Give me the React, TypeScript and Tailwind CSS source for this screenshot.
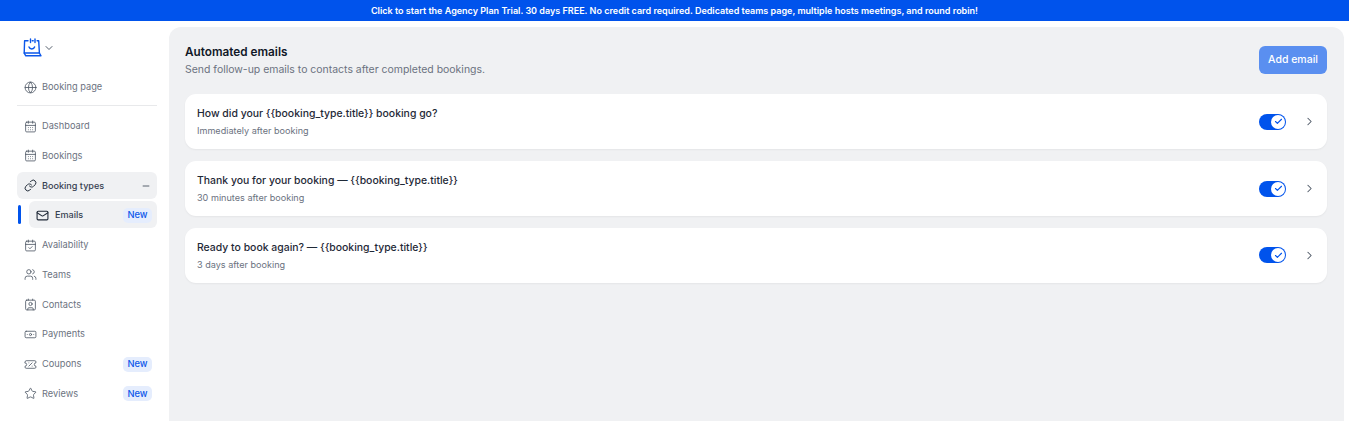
import React from "react";
import { Globe, CalendarDays, Link, Minus, Mail, CalendarCheck, Users, Contact, Banknote, TicketPercent, Star, ChevronDown, ChevronRight, Check } from "lucide-react";

const F = { fontFamily: "Inter, sans-serif" };

function Logo() {
  return (
    <svg width="19" height="19" viewBox="0 0 19 19" fill="none" stroke="#0b57ea" strokeWidth="1.4" strokeLinecap="round" strokeLinejoin="round">
      <path d="M7.5 1v3.5M12 1v3.5" />
      <path d="M5 2.8H1.6L1.2 15h15.2L15.7 2.8h-1.6M10.2 2.8H9.2" />
      <path d="M1.2 15.2 2.8 17.8h15.2l-1.6-2.8" />
      <path d="M6 9c.8 2.6 4.8 2.6 5.6 0" />
    </svg>
  );
}

function Item({ icon: Icon, label, badge }: { icon: any; label: string; badge?: boolean }) {
  return (
    <div className="flex h-[27px] items-center pl-[6.5px] pr-[5px] pt-[1px] text-[#6b7280]">
      <Icon size={13} strokeWidth={1.5} className="mr-[5.5px] shrink-0 text-[#4b5563]" />
      <span className="flex-1 text-[9.25px]">{label}</span>
      {badge && <New />}
    </div>
  );
}

function New() {
  return <span className="flex h-[15px] w-[29px] items-center justify-center rounded-[5px] bg-[#e5edfd] text-[9.3px] font-medium text-[#0b57ea]">New</span>;
}

function Row({ title, sub }: { title: string; sub: string }) {
  return (
    <div className="flex h-[55.4px] items-center rounded-[11px] bg-white pl-[12px] pr-[11px] shadow-[0_1px_2px_rgba(0,0,0,0.05)]">
      <div className="flex-1 pb-[1px]">
        <div className="pt-[1px] text-[10.45px] font-medium leading-[18px] text-[#1f2937]">{title}</div>
        <div className="text-[9.1px] leading-[15px] text-[#6b7280]">{sub}</div>
      </div>
      <div className="flex h-[16px] w-[27px] items-center justify-end rounded-full bg-[#0053ec] pr-[1px]">
        <span className="flex h-[14px] w-[14px] items-center justify-center rounded-full bg-white">
          <Check size={9} strokeWidth={3} className="text-[#0053ec]" />
        </span>
      </div>
      <ChevronRight size={13} strokeWidth={1.9} className="ml-[17px] text-[#4b5563]" />
    </div>
  );
}

export default function App() {
  return (
    <div style={F} className="flex h-[421px] w-[1360px] flex-col overflow-hidden bg-white">
      <div className="flex h-[21px] w-[1349px] shrink-0 items-center justify-center bg-[#0053ec] text-[9.03px] font-semibold text-white">
        Click to start the Agency Plan Trial. 30 days FREE. No credit card required. Dedicated teams page, multiple hosts meetings, and round robin!
      </div>
      <div className="flex flex-1">
        <aside className="w-[169px] shrink-0 pl-[17px] pr-[12px]">
          <div className="flex h-[52px] items-center pl-[6px] pt-[1px]">
            <Logo />
            <ChevronDown size={12} strokeWidth={1.9} className="ml-[1px] text-[#4b5563]" />
          </div>
          <Item icon={Globe} label="Booking page" />
          <div className="mb-[6px] mt-[5px] h-px bg-[#e8e9eb]" />
          <div className="flex flex-col gap-[2.75px]">
            <Item icon={CalendarDays} label="Dashboard" />
            <Item icon={CalendarDays} label="Bookings" />
            <div className="flex h-[27px] items-center rounded-[6px] bg-[#f0f1f3] pl-[6.5px] pr-[6px] pt-[1px] text-[#374151]">
              <Link size={13} strokeWidth={1.8} className="mr-[5.5px] text-[#1f2937]" />
              <span className="flex-1 text-[9.1px] font-medium">Booking types</span>
              <Minus size={10} strokeWidth={2.2} className="text-[#4b5563]" />
            </div>
            <div className="relative ml-[12px] flex h-[27px] items-center rounded-[6px] bg-[#f0f1f3] pl-[7px] pr-[5px] pt-[1px] text-[#374151]">
              <span className="absolute left-[-11px] top-[4px] h-[19px] w-[3px] rounded-full bg-[#0053ec]" />
              <Mail size={13} strokeWidth={2} className="mr-[6px] text-[#1f2937]" />
              <span className="flex-1 text-[9.1px] font-medium">Emails</span>
              <New />
            </div>
            <Item icon={CalendarCheck} label="Availability" />
            <Item icon={Users} label="Teams" />
            <Item icon={Contact} label="Contacts" />
            <Item icon={Banknote} label="Payments" />
            <Item icon={TicketPercent} label="Coupons" badge />
            <Item icon={Star} label="Reviews" badge />
          </div>
        </aside>
        <main className="mr-[16px] mt-[6px] flex-1 rounded-tl-[12px] rounded-tr-[12px] bg-[#f0f1f3] pl-[16px] pr-[17px] pt-[15px]">
          <div className="mb-[14px] flex h-[38px] items-start justify-between">
            <div>
              <div className="pt-[1px] text-[11.75px] font-semibold leading-[18px] text-[#111827]">Automated emails</div>
              <div className="text-[10.46px] leading-[17px] text-[#6b7280]">Send follow-up emails to contacts after completed bookings.</div>
            </div>
            <button className="mt-[4px] flex h-[28px] w-[68px] items-center justify-center rounded-[6px] bg-[#5a8ff0] text-[10.5px] font-medium text-white">Add email</button>
          </div>
          <div className="flex flex-col gap-[11.5px]">
            <Row title="How did your {{booking_type.title}} booking go?" sub="Immediately after booking" />
            <Row title="Thank you for your booking — {{booking_type.title}}" sub="30 minutes after booking" />
            <Row title="Ready to book again? — {{booking_type.title}}" sub="3 days after booking" />
          </div>
        </main>
      </div>
    </div>
  );
}
